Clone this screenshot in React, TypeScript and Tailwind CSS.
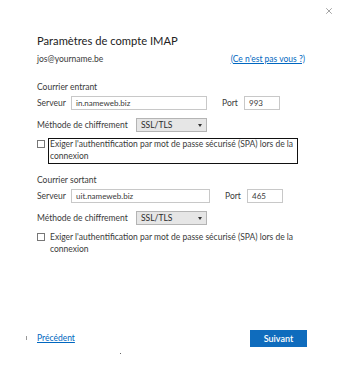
import { X } from 'lucide-react';

function Field({ value, width }: { value: string; width: string }) {
  return (
    <div className={`${width} h-[14px] border border-[#c8c8c8] bg-white flex items-center pl-[4px] text-[8px] text-[#3a3a3a]`}>
      {value}
    </div>
  );
}

function Select() {
  return (
    <div className="w-[71px] h-[14px] border border-[#b4b4b4] bg-[#e6e6e6] flex items-center justify-between pl-[4px] pr-[4px] text-[8.5px] text-[#2a2a2a]">
      <span>SSL/TLS</span>
      <span className="w-0 h-0 border-l-[2.5px] border-r-[2.5px] border-t-[3px] border-l-transparent border-r-transparent border-t-[#333]" />
    </div>
  );
}

function Section({
  title,
  server,
  port,
  serverW,
  focused,
}: {
  title: string;
  server: string;
  port: string;
  serverW: string;
  focused?: boolean;
}) {
  return (
    <div className="flex flex-col">
      <div className="h-[12px] leading-[12px]">{title}</div>
      <div className="flex items-center h-[14px] mt-[3px]">
        <span className="w-[34px]">Serveur</span>
        <Field value={server} width={serverW} />
        <span className="ml-[15px] w-[22px]">Port</span>
        <Field value={port} width="w-[36px]" />
      </div>
      <div className="flex items-center h-[14px] mt-[8px]">
        <span className="w-[99px]">Méthode de chiffrement</span>
        <Select />
      </div>
      <div className="flex items-start mt-[7px]">
        <div className="w-[8px] h-[8px] border border-[#777] bg-white mt-[1px] shrink-0" />
        <div
          className={`ml-[4px] w-[248px] leading-[11.5px] pl-[1px] pb-[1px] ${
            focused ? 'outline outline-1 outline-[#111]' : ''
          }`}
        >
          Exiger l'authentification par mot de passe sécurisé (SPA) lors de la connexion
        </div>
      </div>
    </div>
  );
}

export default function App() {
  return (
    <div className="w-[342px] h-[387px] bg-white relative font-['Segoe_UI','Lato','Noto_Sans',sans-serif] text-[8.5px] text-[#3a3a3a] overflow-hidden">
      <div className="flex justify-end pt-[6px] pr-[8px] h-[20px]">
        <X className="w-[10px] h-[10px] text-[#555]" strokeWidth={1.3} />
      </div>

      <div className="pl-[37px] pr-[35px] flex flex-col">
        <h1 className="mt-[14px] text-[11.2px] leading-[14px] text-[#222]">Paramètres de compte IMAP</h1>
        <div className="flex justify-between items-center mt-[5px] h-[12px]">
          <span className="text-[8.5px]">jos@yourname.be</span>
          <a className="text-[8.5px] text-[#0067c0] underline mr-[2px]">(Ce n'est pas vous ?)</a>
        </div>

        <div className="mt-[16px]">
          <Section
            title="Courrier entrant"
            server="in.nameweb.biz"
            port="993"
            serverW="w-[136px]"
            focused
          />
        </div>
        <div className="mt-[11px]">
          <Section
            title="Courrier sortant"
            server="uit.nameweb.biz"
            port="465"
            serverW="w-[139px]"
          />
        </div>
      </div>

      <div className="absolute left-[26px] top-[336px] w-[1px] h-[4px] bg-[#999]" />
      <div className="absolute left-[120px] top-[353px] w-[1px] h-[1px] bg-[#666]" />

      <div className="absolute left-0 right-0 top-[330px] flex items-center justify-between pl-[37px] pr-[35px]">
        <a className="text-[8.5px] text-[#0067c0] underline">Précédent</a>
        <button className="w-[57px] h-[17px] bg-[#0f6cbd] text-white text-[9px] font-semibold flex items-center justify-center">
          Suivant
        </button>
      </div>
    </div>
  );
}
